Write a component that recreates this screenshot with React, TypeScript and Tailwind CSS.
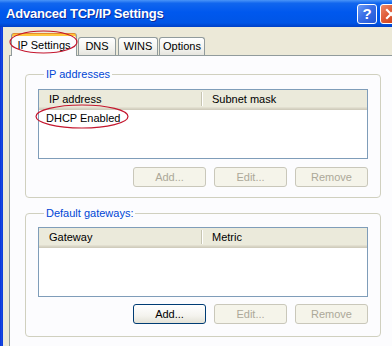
import React from "react";

function Btn({ label, enabled = false }: { label: string; enabled?: boolean }) {
  return enabled ? (
    <div className="w-[73px] h-[20px] rounded-[3px] border border-[#003C74] bg-[linear-gradient(to_bottom,#FFFFFF_0%,#F4F3EE_60%,#E3E1D6_100%)] flex items-center justify-center text-black">
      {label}
    </div>
  ) : (
    <div className="w-[73px] h-[20px] rounded-[3px] border border-[#C9C7BA] bg-[#F5F4EA] flex items-center justify-center text-[#ACA899]">
      {label}
    </div>
  );
}

function ListView({ col1, col2, row, h }: { col1: string; col2: string; row?: string; h: string }) {
  return (
    <div className={`border border-[#7F9DB9] bg-white flex flex-col ${h}`}>
      <div className="h-[20px] flex items-center bg-[#EBEADB] shadow-[inset_0_-1px_#D0CCBC,inset_0_-2px_#D8D5C5,inset_0_-3px_#E2DFD0]">
        <div className="w-[162px] pl-[10px] pb-[2px] text-black">{col1}</div>
        <div className="w-px h-[14px] bg-[#C7C5B2] mb-[2px]" />
        <div className="w-px h-[14px] bg-white mb-[2px]" />
        <div className="pl-[9px] pb-[2px] text-black">{col2}</div>
      </div>
      {row && <div className="h-[16px] leading-[16px] pl-[7px] text-black">{row}</div>}
    </div>
  );
}

function Group({
  title,
  children,
  className = "",
}: {
  title: string;
  children: React.ReactNode;
  className?: string;
}) {
  return (
    <fieldset className={`border border-[#D0D0BF] rounded-[4px] px-[12px] ${className}`}>
      <legend className="ml-[6px] px-[2px] leading-[13px] text-[#0046D5]">{title}</legend>
      {children}
    </fieldset>
  );
}

export default function App() {
  return (
    <div className="relative w-[392px] h-[346px] overflow-hidden flex flex-col bg-[#ECE9D8] font-['Liberation_Sans',sans-serif] text-[11px] text-black">
      {/* Title bar */}
      <div className="h-[27px] shrink-0 flex items-center pl-[6px] bg-[linear-gradient(to_bottom,#4A95F8_0%,#1166EE_12%,#0058EE_45%,#0055E6_85%,#0040C6_100%)]">
        <span className="flex-1 text-white font-bold text-[13px] tracking-[-0.2px] [text-shadow:1px_1px_0_#0B2A9A]">
          Advanced TCP/IP Settings
        </span>
        <div className="flex gap-[3px] mr-[-9px]">
          <div className="w-[20px] h-[20px] rounded-[3px] border border-white bg-[linear-gradient(135deg,#6C9CF8_0%,#3A6FE6_45%,#2457D6_100%)] flex items-center justify-center text-white font-bold text-[15px] leading-none">
            ?
          </div>
          <div className="w-[21px] h-[20px] rounded-[3px] border border-white bg-[linear-gradient(135deg,#EE8A6A_0%,#DD5530_50%,#C23A18_100%)] flex items-center justify-center">
            <svg width="12" height="12" viewBox="0 0 12 12">
              <path d="M2 2 L10 10 M10 2 L2 10" stroke="white" strokeWidth="2.2" strokeLinecap="square" />
            </svg>
          </div>
        </div>
      </div>

      {/* Body */}
      <div className="flex-1 flex min-h-0">
        <div className="w-[3px] bg-[linear-gradient(to_right,#0831D9,#1646E0,#0A3ADB)]" />
        <div className="flex-1 flex flex-col pl-[6px] pt-[6px] min-w-0">
          {/* Tabs */}
          <div className="h-[22px] shrink-0 flex items-start pl-[2px]">
            <div className="relative z-10 w-[66px] h-[23px] rounded-t-[3px] border-x border-[#919B9C] bg-[#FCFCFE] shadow-[inset_0_1px_#E68B2C,inset_0_3px_#FFC73C] flex items-center justify-center pt-[2px]">
              IP Settings
            </div>
            <div className="ml-[1px] mt-[4px] w-[38px] h-[18px] rounded-t-[3px] border-x border-t border-[#919B9C] bg-[linear-gradient(to_bottom,#FFFFFF,#F3F3EF_60%,#E6E5DE)] flex items-center justify-center">
              DNS
            </div>
            <div className="ml-[2px] mt-[4px] w-[40px] h-[18px] rounded-t-[3px] border-x border-t border-[#919B9C] bg-[linear-gradient(to_bottom,#FFFFFF,#F3F3EF_60%,#E6E5DE)] flex items-center justify-center">
              WINS
            </div>
            <div className="ml-[1px] mt-[4px] w-[46px] h-[18px] rounded-t-[3px] border-x border-t border-[#919B9C] bg-[linear-gradient(to_bottom,#FFFFFF,#F3F3EF_60%,#E6E5DE)] flex items-center justify-center">
              Options
            </div>
          </div>

          {/* Page */}
          <div className="flex-1 border-l border-t border-[#919B9C] bg-[#FCFCFE] pl-[15px] pr-[11px] pt-[12px] flex flex-col">
            <Group title="IP addresses" className="pb-[10px]">
              <div className="pt-[8px]">
                <ListView col1="IP address" col2="Subnet mask" row="DHCP Enabled" h="h-[70px]" />
                <div className="mt-[8px] flex justify-end gap-[8px]">
                  <Btn label="Add..." />
                  <Btn label="Edit..." />
                  <Btn label="Remove" />
                </div>
              </div>
            </Group>
            <Group title="Default gateways:" className="mt-[9px] pb-[12px]">
              <div className="pt-[7px]">
                <ListView col1="Gateway" col2="Metric" h="h-[70px]" />
                <div className="mt-[7px] flex justify-end gap-[8px]">
                  <Btn label="Add..." enabled />
                  <Btn label="Edit..." />
                  <Btn label="Remove" />
                </div>
              </div>
            </Group>
          </div>
        </div>
      </div>

      {/* Red annotation ellipses */}
      <svg className="absolute left-0 top-0 z-20 pointer-events-none" width="392" height="346">
        <ellipse cx="43.5" cy="42" rx="33.5" ry="11" fill="none" stroke="#C4162E" strokeWidth="1.2" />
        <ellipse cx="82" cy="116.5" rx="46" ry="11.5" fill="none" stroke="#C4162E" strokeWidth="1.2" />
      </svg>
    </div>
  );
}
